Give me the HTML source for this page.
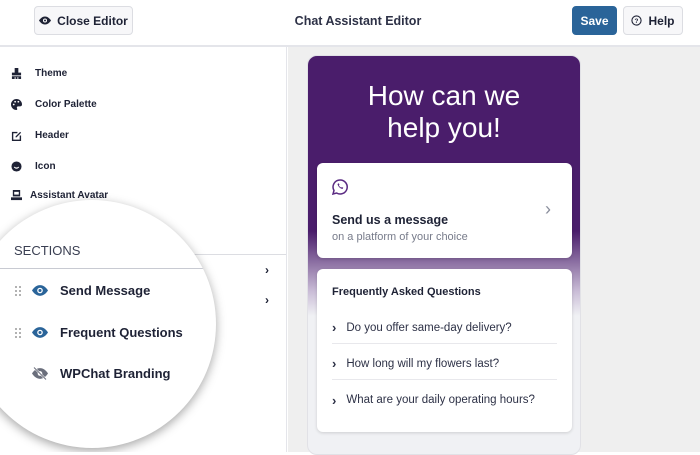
<!DOCTYPE html>
<html><head><style>
*{box-sizing:border-box;margin:0;padding:0}
body{width:700px;height:452px;overflow:hidden;font-family:"Liberation Sans",sans-serif;background:#fff;position:relative;color:#1e2235}
.hdr{position:absolute;left:0;top:0;width:700px;height:47px;border-bottom:2px solid #e4e5ea;background:#fff}
.btn{position:absolute;top:6px;height:29px;border:1px solid #dcdde2;border-radius:4px;background:#f7f7f9;font-size:12px;font-weight:bold;display:flex;align-items:center;justify-content:center;gap:6px;color:#1e2235}
.side{position:absolute;left:0;top:47px;width:287px;height:405px;background:#fff;border-right:1px solid #e4e5ea;overflow:hidden}
.item{position:absolute;left:11px;font-size:10px;font-weight:bold;display:flex;align-items:center;gap:13px}
.ico{width:11px;height:11px;display:inline-block}
.prev{position:absolute;left:288px;top:47px;width:412px;height:405px;background:#efefef}
.chat{position:absolute;left:307px;top:55px;width:274px;height:400px;border-radius:10px;background:linear-gradient(#4a1d6b 0,#4a1d6b 175px,#c9bcd6 235px,#f0f1f4 260px);border:1px solid #e1e1e6}
.card{position:absolute;left:9px;width:255px;background:#fff;border-radius:6px;box-shadow:0 1px 3px rgba(0,0,0,.15)}
.q{position:absolute;left:15px;width:225px;font-size:11.5px;color:#2d3146;display:flex;align-items:center;gap:10px}
.circle{position:absolute;left:-32px;top:153px;width:248px;height:248px;border-radius:50%;background:#fff;box-shadow:0 3px 10px rgba(0,0,0,.35);overflow:hidden}
.row{position:absolute;left:46px;width:220px;display:flex;align-items:center;font-size:13px;font-weight:bold;color:#1e2235}
.dots{width:8px;height:12px;background:radial-gradient(circle,#999 0.8px,transparent 1px) 0 0/4px 4px;margin-right:10px}
</style></head><body>
<div class="hdr">
 <div class="btn" style="left:34px;width:99px"><svg width="12" height="9" viewBox="0 0 24 16"><path d="M12 0C6 0 2 5 0 8c2 3 6 8 12 8s10-5 12-8c-2-3-6-8-12-8z" fill="#1e2235"/><circle cx="12" cy="8" r="4" fill="#fff"/><circle cx="12" cy="8" r="2" fill="#1e2235"/></svg>Close Editor</div>
 <div style="position:absolute;left:0;width:700px;top:14px;text-align:center;font-size:12.5px;font-weight:bold;color:#2d3146;padding-left:16px">Chat Assistant Editor</div>
 <div class="btn" style="left:572px;width:45px;background:#2a6499;border-color:#2a6499;color:#fff">Save</div>
 <div class="btn" style="left:623px;width:60px"><svg width="11" height="11" viewBox="0 0 12 12"><circle cx="6" cy="6" r="5" fill="none" stroke="#1e2235" stroke-width="1.2"/><text x="6" y="8.5" font-size="7" text-anchor="middle" font-weight="bold" fill="#1e2235" font-family="Liberation Sans">?</text></svg>Help</div>
</div>
<div class="side">
 <div class="item" style="top:21px"><svg class="ico" viewBox="0 0 12 12"><path d="M4 0h4v5h3v3H1V5h3z M1 9h10v3H8v-2H7v2H5v-2H4v2H1z" fill="#1e2235"/></svg>Theme</div>
 <div class="item" style="top:52px"><svg class="ico" viewBox="0 0 12 12"><path d="M6 0a6 6 0 1 0 0 12c1 0 1-1 .5-2s0-2 1.5-2h2c1.5 0 2-1 2-2A6 6 0 0 0 6 0z" fill="#1e2235"/><circle cx="3" cy="6" r="1" fill="#fff"/><circle cx="4.5" cy="3" r="1" fill="#fff"/><circle cx="8" cy="3" r="1" fill="#fff"/></svg>Color Palette</div>
 <div class="item" style="top:83px"><svg class="ico" viewBox="0 0 12 12"><path d="M1 2h6v1.5H2.5v7h7V6H11v6H1z" fill="#1e2235"/><path d="M5 7l5-5 1 1-5 5H5z" fill="#1e2235"/></svg>Header</div>
 <div class="item" style="top:114px"><svg class="ico" viewBox="0 0 12 12"><circle cx="6" cy="6" r="5.5" fill="#1e2235"/><path d="M3.5 6.5q2.5 2.5 5 0" stroke="#fff" stroke-width="1.2" fill="none"/></svg>Icon</div>
 <div class="item" style="top:143px;gap:8px"><svg class="ico" viewBox="0 0 12 12"><rect x="2" y="0" width="8" height="7" fill="#1e2235"/><rect x="3.5" y="2" width="5" height="3" fill="#fff"/><rect x="0" y="8" width="12" height="3" fill="#1e2235"/></svg>Assistant Avatar</div>
 <div style="position:absolute;left:0;top:207px;width:287px;height:1px;background:#dcdde2"></div>
 <div class="circle">
  <div style="position:absolute;left:46px;top:43px;font-size:13px;color:#3a3f52">SECTIONS</div>
  <div style="position:absolute;left:0;top:68px;width:300px;height:1px;background:#c8cad2"></div>
  <div class="row" style="top:83px"><span class="dots"></span><svg width="16" height="11" viewBox="0 0 24 16"><path d="M12 0C6 0 2 5 0 8c2 3 6 8 12 8s10-5 12-8c-2-3-6-8-12-8z" fill="#2a6499"/><circle cx="12" cy="8" r="4.2" fill="#fff"/><circle cx="12" cy="8" r="2.3" fill="#2a6499"/></svg><span style="margin-left:12px">Send Message</span></div>
  <div class="row" style="top:125px"><span class="dots"></span><svg width="16" height="11" viewBox="0 0 24 16"><path d="M12 0C6 0 2 5 0 8c2 3 6 8 12 8s10-5 12-8c-2-3-6-8-12-8z" fill="#2a6499"/><circle cx="12" cy="8" r="4.2" fill="#fff"/><circle cx="12" cy="8" r="2.3" fill="#2a6499"/></svg><span style="margin-left:12px">Frequent Questions</span></div>
  <div class="row" style="top:166px;left:64px"><svg width="16" height="13" viewBox="0 0 24 18"><path d="M12 1C6 1 2 6 0 9c2 3 6 8 12 8s10-5 12-8c-2-3-6-8-12-8z" fill="#6b6f7c"/><circle cx="12" cy="9" r="3.5" fill="#fff"/><path d="M3 0l18 18" stroke="#fff" stroke-width="3"/><path d="M3 0l18 18" stroke="#6b6f7c" stroke-width="1.5"/></svg><span style="margin-left:12px">WPChat Branding</span></div>
 </div>
 <div style="position:absolute;left:265px;top:216px;font-size:12px;font-weight:bold">&#8250;</div>
 <div style="position:absolute;left:265px;top:246px;font-size:12px;font-weight:bold">&#8250;</div>
</div>
<div class="prev"></div>
<div class="chat">
 <div style="position:absolute;left:0;width:272px;top:24px;text-align:center;color:#fff;font-size:28px;line-height:32px">How can we<br>help you!</div>
 <div class="card" style="top:107px;height:95px">
  <svg style="position:absolute;left:15px;top:16px" width="16" height="16" viewBox="0 0 16 16"><path d="M8 1a7 7 0 0 0-6 10.5L1 15l3.6-1A7 7 0 1 0 8 1z" fill="none" stroke="#5a2a82" stroke-width="1.5"/><path d="M5.5 5c.5 2.5 2.5 4.5 5 5l.8-1.2-1.5-.8-.6.6c-1-.4-1.9-1.3-2.3-2.3l.6-.6-.8-1.5z" fill="#5a2a82"/></svg>
  <div style="position:absolute;left:15px;top:50px;font-size:12.5px;font-weight:bold;color:#1e2235">Send us a message</div>
  <div style="position:absolute;left:15px;top:68px;font-size:11px;color:#777b8a">on a platform of your choice</div>
  <div style="position:absolute;left:228px;top:36px;font-size:18px;color:#8a8e9c">&#8250;</div>
 </div>
 <div class="card" style="top:213px;height:163px">
  <div style="position:absolute;left:15px;top:17px;font-size:11px;font-weight:bold;color:#1e2235">Frequently Asked Questions</div>
  <div class="q" style="top:43px;height:32px;border-bottom:1px solid #e8e8ec"><b style="font-size:13px">&#8250;</b>Do you offer same-day delivery?</div>
  <div class="q" style="top:79px;height:32px;border-bottom:1px solid #e8e8ec"><b style="font-size:13px">&#8250;</b>How long will my flowers last?</div>
  <div class="q" style="top:115px;height:32px"><b style="font-size:13px">&#8250;</b>What are your daily operating hours?</div>
 </div>
</div>
</body></html>
